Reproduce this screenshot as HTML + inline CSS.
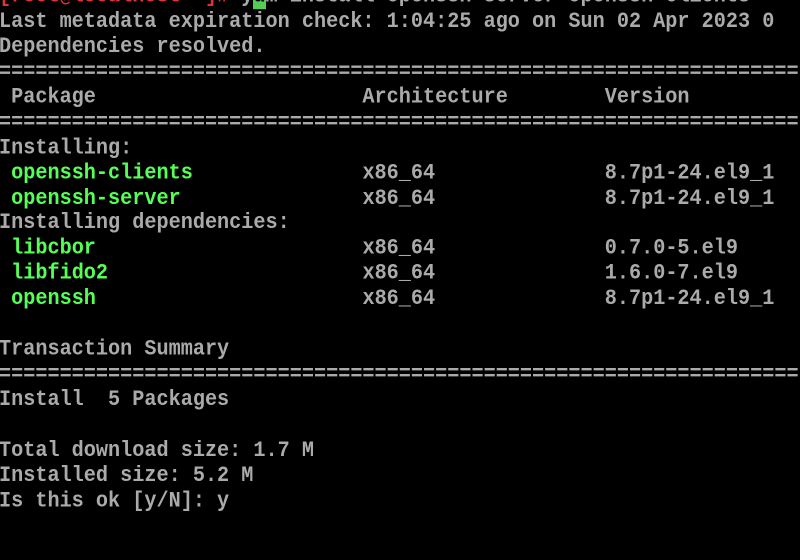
<!DOCTYPE html>
<html><head><style>
html,body{margin:0;padding:0;background:#000;width:800px;height:560px;overflow:hidden}
pre{position:absolute;left:-1px;top:-14.8px;margin:0;font-family:"Liberation Mono",monospace;font-size:20.2px;line-height:22.93px;color:#aaa;font-weight:bold;transform:scaleY(1.1);transform-origin:0 0;}
.g{color:#55ff55}.r{color:#d33}.o{color:#c80}.c{background:#5c5;color:#000}
</style></head><body>
<pre><span class="r">[root@localhost</span><span class="o"> ~</span><span class="r">]#</span> y<span class="c">u</span>m install openssh-server openssh-clients
Last metadata expiration check: 1:04:25 ago on Sun 02 Apr 2023 0
Dependencies resolved.
==================================================================
 Package                      Architecture        Version
==================================================================
Installing:
 <span class="g">openssh-clients</span>              x86_64              8.7p1-24.el9_1
 <span class="g">openssh-server</span>               x86_64              8.7p1-24.el9_1
Installing dependencies:
 <span class="g">libcbor</span>                      x86_64              0.7.0-5.el9
 <span class="g">libfido2</span>                     x86_64              1.6.0-7.el9
 <span class="g">openssh</span>                      x86_64              8.7p1-24.el9_1

Transaction Summary
==================================================================
Install  5 Packages

Total download size: 1.7 M
Installed size: 5.2 M
Is this ok [y/N]: y</pre>
</body></html>
